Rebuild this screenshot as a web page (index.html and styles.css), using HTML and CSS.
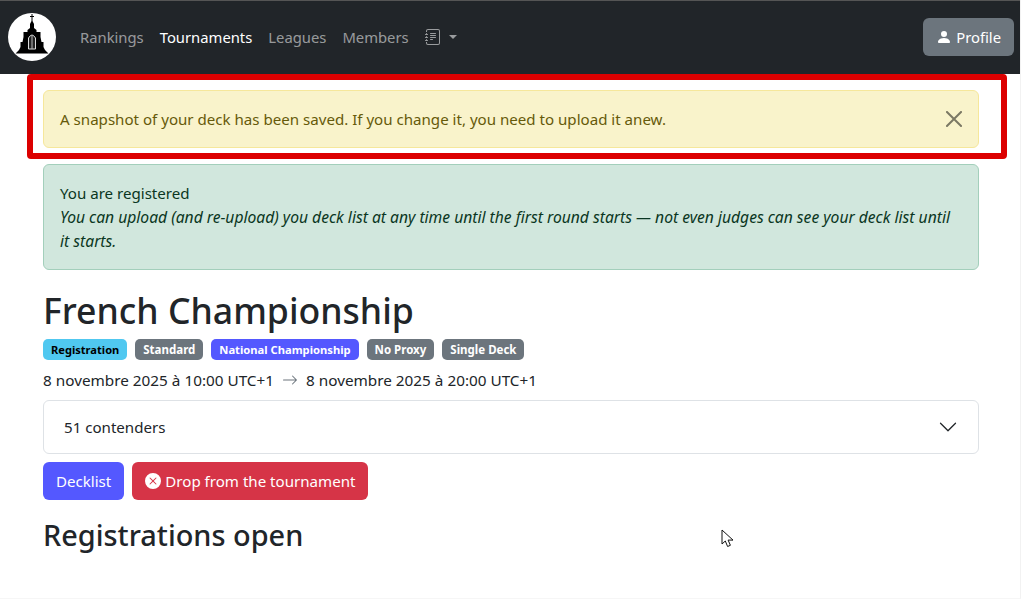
FILE: index.html
```html
<!DOCTYPE html>
<html lang="en">
<head>
    <meta charset="UTF-8">
    <meta name="viewport" content="width=device-width, initial-scale=1.0">
    <title>French Championship</title>
    <link rel="stylesheet" href="styles.css">
</head>
<body>
    <nav class="navbar">
        <a class="brand" href="#">
            <svg width="48" height="48" viewBox="0 0 48 48">
                <circle cx="24" cy="24" r="24" fill="#fff"/>
                <path d="M23.5 1H24.500V3H26V4H24.500V8L26 11V15L28.500 17V19H32.500V24L33.500 29H35.500V34L37 37L40.500 40.500H7.500L11 37L12.500 34V29H14.500L15.500 24V19H19.500V17L22 15V11L23.500 8V4H22V3H23.500Z" fill="#000"/>
                <path d="M20.500 36V25Q24 19 27.500 25V36Z" fill="#222" stroke="#ddd" stroke-width="1"/>
                <path d="M24 23V36" stroke="#bbb" stroke-width="1"/>
            </svg>
        </a>
        <ul class="nav-links">
            <li><a href="#">Rankings</a></li>
            <li><a href="#" class="active">Tournaments</a></li>
            <li><a href="#">Leagues</a></li>
            <li><a href="#">Members</a></li>
            <li>
                <a href="#" class="dropdown">
                    <svg width="16" height="16" viewBox="0 0 16 16" fill="currentColor">
                        <path d="M5 10.5a.5.5 0 0 1 .5-.5h2a.5.5 0 0 1 0 1h-2a.5.5 0 0 1-.5-.5m0-2a.5.5 0 0 1 .5-.5h5a.5.5 0 0 1 0 1h-5a.5.5 0 0 1-.5-.5m0-2a.5.5 0 0 1 .5-.5h5a.5.5 0 0 1 0 1h-5a.5.5 0 0 1-.5-.5m0-2a.5.5 0 0 1 .5-.5h5a.5.5 0 0 1 0 1h-5a.5.5 0 0 1-.5-.5"/>
                        <path d="M3 0h10a2 2 0 0 1 2 2v12a2 2 0 0 1-2 2H3a2 2 0 0 1-2-2v-1h1v1a1 1 0 0 0 1 1h10a1 1 0 0 0 1-1V2a1 1 0 0 0-1-1H3a1 1 0 0 0-1 1v1H1V2a2 2 0 0 1 2-2"/>
                        <path d="M1 5v-.5a.5.5 0 0 1 1 0V5h.5a.5.5 0 0 1 0 1h-2a.5.5 0 0 1 0-1zm0 3v-.5a.5.5 0 0 1 1 0V8h.5a.5.5 0 0 1 0 1h-2a.5.5 0 0 1 0-1zm0 3v-.5a.5.5 0 0 1 1 0v.5h.5a.5.5 0 0 1 0 1h-2a.5.5 0 0 1 0-1z"/>
                    </svg>
                    <span class="caret"></span>
                </a>
            </li>
        </ul>
        <a href="#" class="btn btn-profile">
            <svg width="16" height="16" viewBox="0 0 16 16" fill="currentColor">
                <path d="M3 14s-1 0-1-1 1-4 6-4 6 3 6 4-1 1-1 1zm5-6a3 3 0 1 0 0-6 3 3 0 0 0 0 6"/>
            </svg>
            Profile
        </a>
    </nav>

    <main class="container">
        <div class="alert alert-warning">
            <span>A snapshot of your deck has been saved. If you change it, you need to upload it anew.</span>
            <svg class="alert-close" width="16" height="16" viewBox="0 0 16 16">
                <path d="M.3.3l15.4 15.4M15.7.3L.3 15.7" stroke="#000" stroke-width="2" fill="none"/>
            </svg>
        </div>
        <div class="alert alert-success">
            You are registered<br>
            <em>You can upload (and re-upload) you deck list at any time until the first round starts — not even judges can see your deck list until it starts.</em>
        </div>

        <h1>French Championship</h1>
        <div class="badges">
            <span class="badge badge-info">Registration</span>
            <span class="badge badge-grey">Standard</span>
            <span class="badge badge-primary">National Championship</span>
            <span class="badge badge-grey">No Proxy</span>
            <span class="badge badge-grey">Single Deck</span>
        </div>
        <p class="dates">
            8 novembre 2025 à 10:00 UTC+1
            <svg width="16" height="16" viewBox="0 0 16 16" fill="#6c757d">
                <path d="M1 8a.5.5 0 0 1 .5-.5h11.793l-3.147-3.146a.5.5 0 0 1 .708-.708l4 4a.5.5 0 0 1 0 .708l-4 4a.5.5 0 0 1-.708-.708L13.293 8.5H1.5A.5.5 0 0 1 1 8"/>
            </svg>
            8 novembre 2025 à 20:00 UTC+1
        </p>

        <div class="accordion">
            <span>51 contenders</span>
            <svg width="20" height="20" viewBox="0 0 16 16" fill="#212529">
                <path d="M1.646 4.646a.5.5 0 0 1 .708 0L8 10.293l5.646-5.647a.5.5 0 0 1 .708.708l-6 6a.5.5 0 0 1-.708 0l-6-6a.5.5 0 0 1 0-.708"/>
            </svg>
        </div>

        <div class="actions">
            <a href="#" class="btn btn-primary">Decklist</a>
            <a href="#" class="btn btn-danger">
                <svg width="16" height="16" viewBox="0 0 16 16" fill="currentColor">
                    <path d="M16 8A8 8 0 1 1 0 8a8 8 0 0 1 16 0M5.354 4.646a.5.5 0 1 0-.708.708L7.293 8l-2.647 2.646a.5.5 0 0 0 .708.708L8 8.707l2.646 2.647a.5.5 0 0 0 .708-.708L8.707 8l2.647-2.646a.5.5 0 0 0-.708-.708L8 7.293z"/>
                </svg>
                Drop from the tournament
            </a>
        </div>

        <h2>Registrations open</h2>
    </main>

    <!-- annotation over the first alert -->
    <div class="highlight"></div>

    <!-- mouse pointer caught in the screenshot -->
    <svg class="pointer" width="14" height="20" viewBox="0 0 14 20">
        <path d="M1 1v14l3.300-3 2.300 5.500 2.800-1.200-2.300-5.200H12z" fill="#fff" stroke="#111" stroke-width="1"/>
    </svg>
</body>
</html>
```

FILE: styles.css
```css
* {
    box-sizing: border-box;
}

html, body {
    height: 100%;
}

body {
    margin: 0;
    font-family: "Noto Sans", "Open Sans", sans-serif;
    font-size: 15.1px;
    line-height: 24px;
    color: #212529;
    background-color: #fff;
    border-right: 1px solid #f2f2f2;
    border-bottom: 1px solid #f6f6f6;
    overflow: hidden;
}

a {
    text-decoration: none;
}

.navbar {
    display: flex;
    align-items: center;
    height: 74px;
    padding: 0 6px 1px 8px;
    font-size: 14.8px;
    background-color: #212529;
    border-top: 1px solid #555;
}

.brand {
    display: flex;
    margin-right: 16px;
}

.nav-links {
    display: flex;
    align-items: center;
    flex-grow: 1;
    list-style: none;
    margin: 0;
    padding: 0;
}

.nav-links a {
    display: flex;
    align-items: center;
    padding: 8px;
    color: rgba(255, 255, 255, 0.55);
}

.nav-links a.active {
    color: #fff;
}

.caret {
    margin-left: 8px;
    border-top: 4px solid;
    border-left: 4px solid transparent;
    border-right: 4px solid transparent;
}

.btn {
    display: inline-flex;
    align-items: center;
    gap: 4px;
    height: 38px;
    padding: 0 13px;
    border-radius: 6px;
    color: #fff;
}

.btn-profile {
    background-color: #6c757d;
}

.btn-primary {
    background-color: #5458ff;
}

.btn-danger {
    background-color: #d63447;
}

.container {
    width: 960px;
    margin-left: 31px;
    padding: 16px 12px 0;
}

.alert {
    padding: 16px;
    margin-bottom: 16px;
    border: 1px solid;
    border-radius: 6px;
}

.alert-warning {
    display: flex;
    justify-content: space-between;
    align-items: center;
    height: 58px;
    color: #665a0a;
    background-color: #f9f3cb;
    border-color: #f6e79b;
}

.alert-close {
    opacity: 0.5;
}

.alert-success {
    color: #0a3622;
    background-color: #d1e7dd;
    border-color: #a3cfbb;
}

.alert-success em {
    font-size: 15.65px;
}

h1 {
    margin: 0 0 5px;
    font-size: 35.6px;
    line-height: 48px;
    font-weight: 500;
}

h2 {
    margin: 16px 0 0;
    font-size: 28.9px;
    line-height: 38px;
    font-weight: 500;
}

.badges {
    display: flex;
    gap: 8px;
    margin-bottom: 8px;
}

.badge {
    padding: 0 8px;
    height: 21px;
    border-radius: 5px;
    font-size: 11.2px;
    line-height: 21px;
    font-weight: 700;
    color: #fff;
}

.badge-info {
    font-size: 11.1px;
    color: #000;
    background-color: #50c8f0;
}

.badge-grey {
    font-size: 11.5px;
    background-color: #6c757d;
}

.badge-primary {
    background-color: #5458ff;
}

.dates {
    display: flex;
    align-items: center;
    gap: 8px;
    margin: 0 0 8px;
    font-size: 15.3px;
}

.accordion {
    display: flex;
    justify-content: space-between;
    align-items: center;
    height: 54px;
    padding: 0 20px;
    margin-bottom: 8px;
    border: 1px solid #dee2e6;
    border-radius: 6px;
}

.actions {
    display: flex;
    gap: 8px;
}

.highlight {
    position: absolute;
    left: 27px;
    top: 74px;
    width: 980px;
    height: 85px;
    border: 6px solid #dc0000;
    border-radius: 4px;
}

.pointer {
    position: absolute;
    left: 721px;
    top: 529px;
}
```
